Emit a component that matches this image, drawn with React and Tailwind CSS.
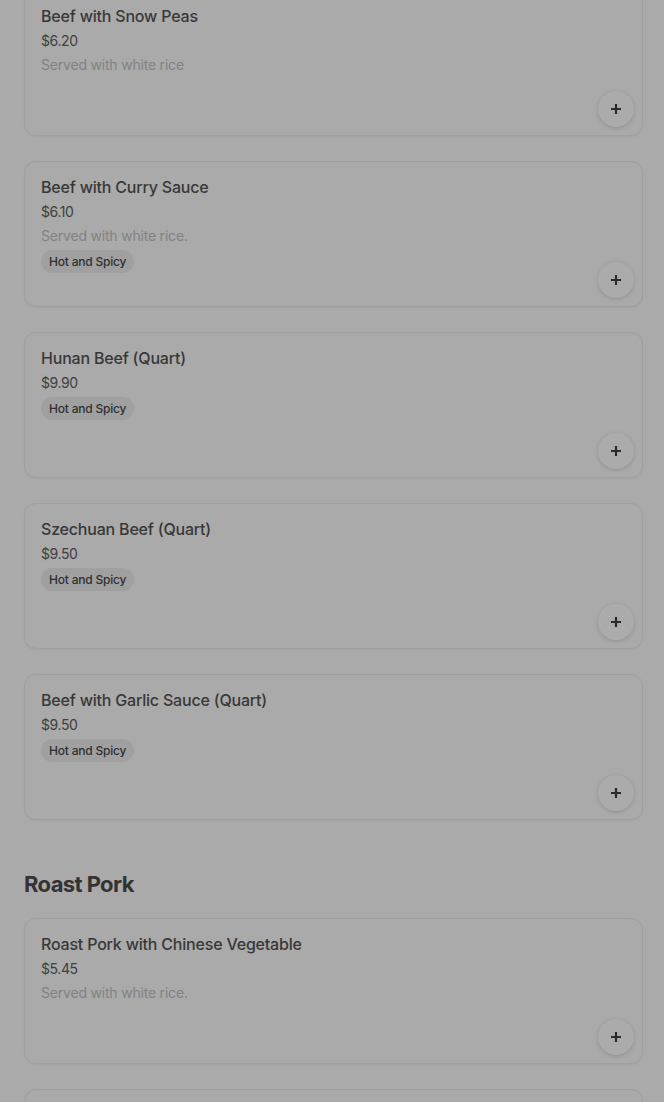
import React from "react";

const beef = [
  { name: "Beef with Snow Peas", price: "$6.20", desc: "Served with white rice" },
  { name: "Beef with Curry Sauce", price: "$6.10", desc: "Served with white rice.", spicy: true },
  { name: "Hunan Beef (Quart)", price: "$9.90", spicy: true },
  { name: "Szechuan Beef (Quart)", price: "$9.50", spicy: true },
  { name: "Beef with Garlic Sauce (Quart)", price: "$9.50", spicy: true },
];

const pork = [
  { name: "Roast Pork with Chinese Vegetable", price: "$5.45", desc: "Served with white rice." },
];

const PlusIcon = () => (
  <svg width="14" height="14" viewBox="0 0 14 14" fill="none">
    <path d="M7 2v10M2 7h10" stroke="#2a2a2a" strokeWidth="2.2" />
  </svg>
);

const ItemCard = ({ item }) => {
  return (
    <div className="flex h-[146px] shrink-0 rounded-xl border border-[#9f9f9f] bg-[#aaaaaa] overflow-hidden shadow-[0_1px_2px_rgba(0,0,0,0.04)]">
      <div className="flex-1 pl-4 pt-[15px]">
        <h3 className="text-[16px] leading-5 font-medium tracking-[-0.2px] text-[#383838]">{item.name}</h3>
        <p className="mt-[5px] text-[14px] leading-5 tracking-[-0.4px] text-[#404040]">{item.price}</p>
        {item.desc && (
          <p className="mt-1 text-[14px] leading-5 tracking-[-0.2px] text-[#828282]">{item.desc}</p>
        )}
        {item.spicy && (
          <span className="mt-[4px] inline-flex h-[23px] items-center rounded-full bg-[#a0a0a0] px-2 text-[12px] font-medium tracking-[-0.2px] text-[#2f2f2f]">
            Hot and Spicy
          </span>
        )}
      </div>
      <div className="self-end p-2">
        <button className="flex h-9 w-9 items-center justify-center rounded-full bg-[#ababab] shadow-[0_1px_4px_rgba(0,0,0,0.16)]">
          <PlusIcon />
        </button>
      </div>
    </div>
  );
};

export default function App() {
  return (
    <div
      className="h-[1102px] bg-[#aaaaaa] pl-6 pr-[21px] overflow-hidden"
      style={{ fontFamily: "Inter, 'Noto Sans', sans-serif" }}
    >
      <div className="-mt-[10px] flex flex-col gap-[25px]">
        {beef.map((item, i) => (
          <ItemCard key={i} item={item} />
        ))}
      </div>

      <h2 className="mt-12 mb-[18px] text-[22px] leading-8 font-bold tracking-[-0.6px] text-[#333333]">
        Roast Pork
      </h2>

      <div className="flex flex-col gap-[25px]">
        {pork.map((item, i) => (
          <ItemCard key={i} item={item} />
        ))}
        {/* next card, only its top edge is in view */}
        <div className="h-[146px] shrink-0 rounded-xl border border-[#9f9f9f] bg-[#aaaaaa]" />
      </div>
    </div>
  );
}
